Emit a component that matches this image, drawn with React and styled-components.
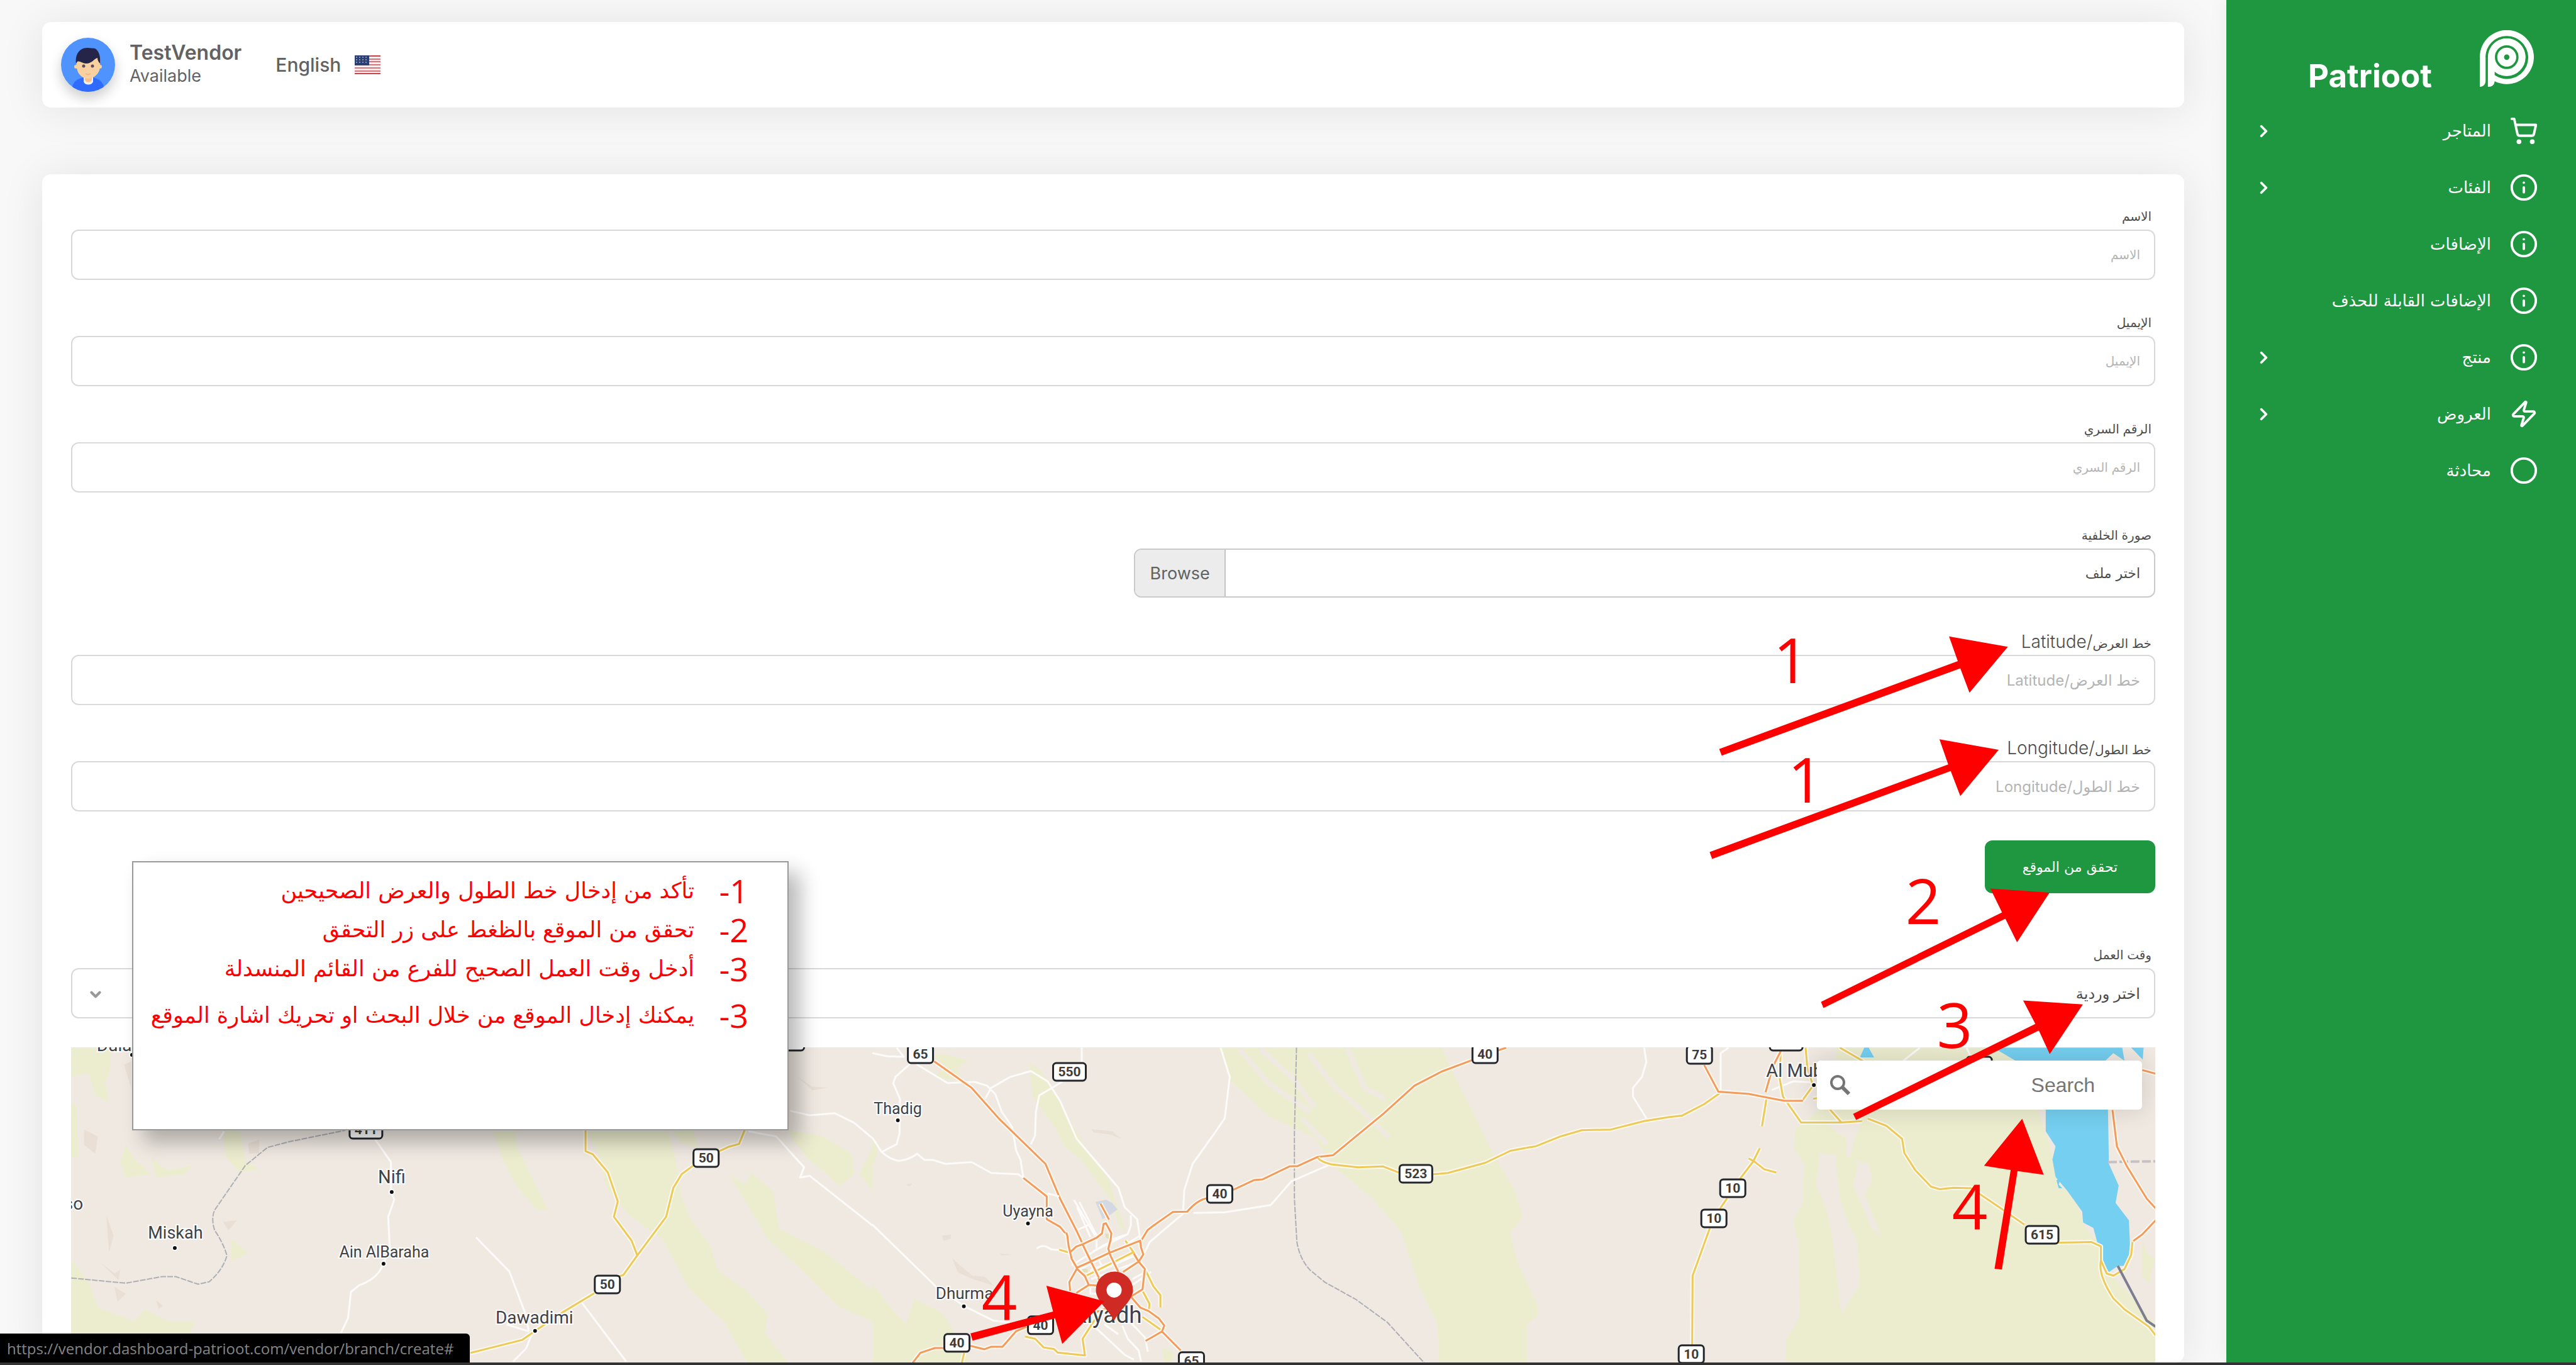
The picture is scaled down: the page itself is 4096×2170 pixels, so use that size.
import React from "react";
import styled, { createGlobalStyle } from "styled-components";
import { ShoppingCart, Info, Zap, Circle, ChevronRight, ChevronDown } from "lucide-react";

const latin = `Inter, "DejaVu Sans", sans-serif`;
const arabic = `"DejaVu Sans", sans-serif`;
const green = "#1f9640";
const red = "#ff0000";

const GlobalStyle = createGlobalStyle`
  *, *::before, *::after { box-sizing: border-box; }
  body { margin: 0; background: #f8f8f8; font-family: ${latin}; color: #626262; }
  input, select, button { font: inherit; color: inherit; }
`;

const Shell = styled.div`
  position: relative;
  height: 100vh;
  display: flex;
  flex-direction: column;
  overflow: hidden;
`;
const Body = styled.div`
  flex: 1;
  min-height: 0;
  display: flex;
`;
const Sidebar = styled.aside`
  flex: 0 0 556px;
  background: ${green};
  color: #fff;
  box-shadow: 0 0 30px rgba(0, 0, 0, 0.06);
`;
const Brand = styled.a`
  display: flex;
  align-items: flex-end;
  gap: 76px;
  padding: 48px 67px 0 0;
  height: 138px;
  color: inherit;
  text-decoration: none;
`;
const BrandName = styled.span`
  font-size: 51px;
  line-height: 52px;
  height: 43px;
  font-weight: 700;
`;
const Menu = styled.ul`
  list-style: none;
  margin: 25px 0 0;
  padding: 0 60px 0 44px;
`;
const MenuLink = styled.a`
  display: flex;
  align-items: center;
  gap: 29px;
  height: 90px;
  color: inherit;
  text-decoration: none;
  font-family: ${arabic};
  font-size: 26px;
`;
const MenuText = styled.span`
  flex: 1;
`;

const Main = styled.main`
  flex: 1;
  min-width: 0;
  display: flex;
  flex-direction: column;
  gap: 106px;
  padding: 35px 67px 0;
  overflow: hidden;
`;
const Panel = styled.section`
  background: #fff;
  border-radius: 14px;
  box-shadow: 0 4px 68px rgba(0, 0, 0, 0.09);
`;
const TopBar = styled(Panel).attrs({ as: "header" })`
  height: 136px;
  padding: 0 30px;
  display: flex;
  align-items: center;
`;
const Avatar = styled.svg`
  width: 86px;
  height: 86px;
  border-radius: 50%;
  box-shadow: 0 10px 20px rgba(0, 0, 0, 0.2);
`;
const User = styled.div`
  display: flex;
  flex-direction: column;
  margin: 0 54px 0 23px;
`;
const UserName = styled.strong`
  font-size: 32px;
  line-height: 36px;
  font-weight: 600;
`;
const UserStatus = styled.span`
  font-size: 27px;
  line-height: 38px;
`;
const Language = styled.a`
  display: flex;
  align-items: center;
  gap: 22px;
  font-size: 30px;
  font-weight: 500;
  color: inherit;
  text-decoration: none;
`;

const Form = styled(Panel).attrs({ as: "form" })`
  flex: 1;
  min-height: 0;
  padding: 52px 46px 0;
  display: flex;
  flex-direction: column;
`;
const Field = styled.div`
  display: flex;
  flex-direction: column;
  margin-bottom: ${(p) => p.$after || 53}px;
`;
const Label = styled.label`
  height: 36px;
  line-height: 30px;
  padding: 0 6px;
  font-family: ${latin};
  font-size: 20px;
  color: #4c4c4c;
`;
const LatinPart = styled.span`
  font-size: 28px;
  font-weight: 300;
`;
const Control = styled.input`
  height: 80px;
  width: 100%;
  padding: 0 22px;
  border: 2px solid #d9d9d9;
  border-radius: 12px;
  background: #fff;
  font-family: ${latin};
  font-size: ${(p) => (p.$wide ? 24 : 20)}px;
  outline: none;
  &::placeholder { color: #b4b4b4; opacity: 1; }
`;
const FileBox = styled.div`
  position: relative;
  width: 49%;
  height: 78px;
  display: flex;
  align-items: stretch;
  justify-content: space-between;
  border: 2px solid #cacaca;
  border-radius: 12px;
  overflow: hidden;
  font-size: 27px;
`;
const FileName = styled.span`
  display: flex;
  align-items: center;
  padding: 0 22px;
  font-family: ${arabic};
  font-size: 22px;
  color: #4c4c4c;
`;
const Browse = styled.span`
  display: flex;
  align-items: center;
  justify-content: center;
  width: 144px;
  background: #ececec;
  border-right: 2px solid #c4c4c4;
`;
const FileInput = styled.input`
  position: absolute;
  inset: 0;
  width: 100%;
  opacity: 0;
`;
const Submit = styled.button`
  align-self: flex-start;
  width: 271px;
  height: 84px;
  margin: -7px 0 83px;
  border: 0;
  border-radius: 12px;
  background: ${green};
  color: #fff;
  font-family: ${arabic};
  font-size: 22px;
`;
const SelectWrap = styled.div`
  position: relative;
  display: flex;
`;
const Select = styled(Control).attrs({ as: "select", $wide: true })`
  appearance: none;
  color: #4c4c4c;
`;
const SelectArrow = styled(ChevronDown)`
  position: absolute;
  left: 26px;
  top: 29px;
  color: #999;
  pointer-events: none;
`;

const MapBox = styled.div`
  position: relative;
  flex: 1;
  min-height: 0;
  overflow: hidden;
  background: #f0e9e2;
`;
const MapArt = styled.svg`
  display: block;
  width: 100%;
`;
const SearchBox = styled.div`
  position: absolute;
  top: 21px;
  right: 21px;
  width: 517px;
  height: 78px;
  display: flex;
  align-items: center;
  padding: 0 75px 0 20px;
  border-radius: 6px;
  background: #fff;
  box-shadow: 0 0 36px 4px rgba(0, 0, 0, 0.12);
`;
const SearchInput = styled.input`
  flex: 1;
  min-width: 0;
  border: 0;
  outline: 0;
  padding: 0;
  background: none;
  font-family: "Liberation Sans", sans-serif;
  font-size: 32px;
  &::placeholder { color: #757575; opacity: 1; }
`;

const Note = styled.section`
  position: absolute;
  left: 210px;
  top: 1369px;
  width: 1044px;
  height: 428px;
  border: 2px solid #999;
  background: #fff;
  box-shadow: 18px 18px 30px rgba(0, 0, 0, 0.28);
  color: ${red};
`;
const Steps = styled.ul`
  list-style: none;
  margin: 0;
  padding: 14px 62px 0 0;
`;
const Step = styled.li`
  display: flex;
  align-items: center;
  height: ${(p) => p.$height}px;
  white-space: nowrap;
  font-family: ${arabic};
  font-size: 35px;
`;
const StepNumber = styled.span`
  flex: 0 0 86px;
  font-family: "Open Sans", sans-serif;
  font-size: 52px;
  line-height: 52px;
`;
const Annotations = styled.svg`
  position: absolute;
  left: 0;
  top: 0;
  width: 100%;
  pointer-events: none;
`;
const StatusUrl = styled.div`
  position: absolute;
  left: 0;
  bottom: 4px;
  height: 46px;
  padding: 0 26px 0 11px;
  display: flex;
  align-items: center;
  border-radius: 0 6px 0 0;
  background: #000;
  color: #858585;
  font-family: "Open Sans", sans-serif;
  font-size: 24px;
`;
const Taskbar = styled.footer`
  height: 4px;
  background: #333;
`;

/* ---------- small drawings ---------- */

const Logo = () => (
  <svg width="86" height="90" viewBox="1090 65 279 292" aria-hidden="true">
    <path fill="#fff" d="M1090 204a139.500 139.500 0 1 1 76 124c0 16-10 29-34 29V204a97 97 0 1 1 34 74v18a110 110 0 1 0-46-92v122c0 18-12 31-30 31z" />
    <circle cx="1229" cy="204" r="103" fill="none" stroke={green} strokeWidth="12" strokeDasharray="500 200" transform="rotate(-180 1229 204)" />
    <circle cx="1229" cy="204" r="97" fill="#fff" />
    <circle cx="1229" cy="204" r="55" fill="none" stroke={green} strokeWidth="12" />
    <circle cx="1229" cy="204" r="14" fill={green} />
    <path fill="#fff" d="M1132 204h34v124c0 16-10 29-34 29z" />
  </svg>
);

const Face = () => (
  <Avatar viewBox="0 0 86 86" role="img" aria-label="TestVendor">
    <rect width="86" height="86" fill="#4f93ff" />
    <path d="M18 78c2-9 8-13 19-15h12c11 2 17 6 19 15L60 86H26z" fill="#2f6bff" />
    <path d="M36 60h15v10c-2 6-13 6-15 0z" fill="#f5eef0" />
    <path d="M38 58h11v9c-1 5-10 5-11 0z" fill="#f9be8d" />
    <path d="M24 38c0-14 38-14 38 0v8c0 10-9 19-19 19s-18-9-18-19z" fill="#f9d09f" />
    <circle cx="24" cy="46" r="3" fill="#f9d09f" />
    <circle cx="62" cy="46" r="3" fill="#f9d09f" />
    <path d="M24 41c-2-14 5-25 18-25l12 1c7 4 9 14 8 24-2-2-4-5-4-9-5 1-9 9-18 9-6 0-11-5-14-3z" fill="#25254a" />
    <circle cx="36" cy="45" r="2.500" fill="#5f4b5e" />
    <circle cx="50" cy="45" r="2.500" fill="#5f4b5e" />
    <path d="M39 57q4 3 8 0" stroke="#f2b489" strokeWidth="2" fill="none" />
  </Avatar>
);

const Flag = () => (
  <svg width="41" height="30" viewBox="0 0 41 30" aria-hidden="true">
    <rect width="41" height="30" fill="#f8eeee" />
    {[0, 5, 9, 14, 19, 24, 28].map((y) => (
      <rect key={y} y={y} width="41" height="2" fill="#c8434c" opacity={y === 0 || y === 28 ? 1 : 0.7} />
    ))}
    <rect width="23" height="16" fill="#2c3f72" />
    {[2, 6, 10].map((y) => [2, 7, 12, 17].map((x) => <rect key={x + "-" + y} x={x} y={y} width="2" height="2" fill="#8894b4" />))}
  </svg>
);

const Magnifier = () => (
  <svg width="34" height="34" viewBox="0 0 34 34" aria-hidden="true">
    <circle cx="13" cy="13" r="10" fill="none" stroke="#757575" strokeWidth="4" />
    <path d="M20 20l11 11" stroke="#757575" strokeWidth="6" />
  </svg>
);

/* ---------- map ---------- */

const SCALE = 0.6933;
const Tile = ({ x, y, sx, sy, children }) => (
  <g transform={`scale(${SCALE}) translate(${x} ${y}) scale(${sx} ${sy})`}>{children}</g>
);
const west = { x: 0, y: 1900, sx: 1.2755, sy: 0.7844 };
const centre = { x: 2000, y: 2350, sx: 0.9566, sy: 0.4981 };
const city = { x: 2300, y: 2700, sx: 0.3571, sy: 0.3333 };
const east = { x: 3500, y: 2350, sx: 1.0204, sy: 0.4981 };

const Line = ({ d, color, width = 3, dash }) => (
  <path d={d} fill="none" stroke={color} strokeWidth={width} strokeDasharray={dash} strokeLinejoin="round" vectorEffect="non-scaling-stroke" />
);
const Road = ({ d, color }) => (
  <>
    <Line d={d} color="#fbf8ef" width={7} />
    <Line d={d} color={color} width={3} />
  </>
);
const LAND = "#f0e9e2";
const GRASS = "#ecedcf";
const WATER = "#75cff0";
const ORANGE = "#f49a5b";
const YELLOW = "#edca58";
const WHITE = "#fcfbf9";
const RAIL = "#aeafb5";

const cities = [
  ["Nifi", 622, 1881, 29, 622, 1895],
  ["Miskah", 278, 1969, 27, 277, 1984],
  ["Ain AlBaraha", 610, 1999, 25, 609, 2009],
  ["Dawadimi", 849, 2104, 28, 850, 2116],
  ["Thadig", 1427, 1771, 25, 1427, 1781],
  ["Uyayna", 1634, 1934, 25, 1634, 1945],
  ["Dhurma", 1533, 2065, 26, 1532, 2077],
  ["Riyadh", 1760, 2103, 37, 0, 0],
  ["Al Mubarraz", 2886, 1712, 29, 2884, 1725],
  ["Dulayyah", 209, 1671, 28, 209, 1677],
  ["Afso", 102, 1923, 28, 0, 0],
];
const shields = [
  ["50", 1122, 1841], ["50", 965, 2042], ["411", 581, 1796], ["505", 1252, 1656], ["65", 1463, 1676],
  ["550", 1700, 1704], ["40", 2361, 1676], ["523", 2251, 1866], ["40", 1939, 1898], ["40", 1654, 2107],
  ["40", 1521, 2135], ["65", 1894, 2164], ["75", 2702, 1677], ["615", 2840, 1656], ["10", 2755, 1889],
  ["10", 2725, 1937], ["10", 2689, 2153], ["615", 3247, 1963], ["75", 3147, 1694],
];

const Map = () => (
  <MapArt viewBox="112 1665 3315 504" role="img" aria-label="Riyadh">
    <rect x="112" y="1665" width="3315" height="504" fill={LAND} />
    <Tile {...west}>
      <path fill={GRASS} d="M127 640H200L195 720 188 740 195 800 170 780 158 715 127 725ZM127 800 137 810 140 955 127 965ZM225 925 240 965 270 1010 225 1020 215 975ZM270 960 300 1000 345 985 330 1010 280 1020ZM400 880H430L435 925 440 970 465 995 430 1005 405 960ZM885 885H925L930 935 960 1035 985 1115 965 1115 930 1050 905 975ZM1050 885H1200L1215 970 1222 1060 1240 1140 1275 1215 1290 1290 1340 1350 1380 1420 1375 1475 1420 1568H1345L1300 1440 1240 1350 1190 1200 1130 1130 1090 1050 1070 930ZM1205 880H1245L1255 935 1225 920ZM1310 1010 1340 1040 1350 1005 1390 1060 1400 1170 1480 1235 1568 1350V1440L1510 1400 1440 1290 1380 1200 1350 1120ZM1420 880 1480 900 1530 950 1535 1010 1510 1045 1485 1010 1455 970 1420 900ZM1545 1010 1568 930V1060ZM127 1260 160 1330 175 1400 240 1440 260 1405 300 1440 350 1440 340 1475 127 1475ZM415 1200 445 1240 415 1265Z" />
      <path fill="#e9dfd5" d="M150 880 175 900 170 950 150 925ZM190 1130 203 1190 195 1240ZM180 1270 205 1300 215 1290 212 1320ZM400 1150 425 1145 410 1175ZM222 690 235 680V760ZM205 1340 225 1360 210 1385ZM1433 725 1460 755 1490 757 1460 765ZM280 1380 292 1395 284 1405ZM445 920 465 910V950H447Z" />
      <Line color={RAIL} width={2} dash="9 2" d="M127 1314 225 1329 290 1310 315 1310 355 1332 375 1325Q400 1290 407 1248 400 1210 385 1175 378 1140 385 1115L440 985 480 932 520 915 620 882" />
      <Line color={WHITE} d="M672 905 702 975 702 1062 708 1085 697 1135 700 1230 688 1272Q680 1315 645 1335L630 1355 625 1430 612 1475M855 1195 915 1295 943 1415 950 1470M910 1450 950 1470M955 1480 945 1520 922 1558M1045 1385 1125 1558M1420 825 1455 838 1500 832 1535 860 1568 905M1345 885 1395 900 1445 990 1438 1020 1455 1015 1490 1060 1568 1160M393 908 402 885" />
      <Road color={YELLOW} d="M1052 882V943L1065 952 1092 1005 1110 1090 1103 1135 1135 1205 1145 1248 1197 1135 1210 1050 1225 1010 1250 980M1290 945 1310 930 1328 922 1338 882M1145 1248 1120 1305 1100 1315M1068 1358 1010 1415 961 1469 938 1495 845 1533" />
    </Tile>
    <Tile {...centre}>
      <path fill={GRASS} d="M830 105H1365L1400 250 1440 400 1490 600 1540 760 1560 880 1530 960 1545 1080 1568 1180 1595 1290V1340L1570 1380V1568H1360L1355 1380 1310 1200 1270 960 1200 800 1110 660 1060 520 950 420 860 260ZM375 175 400 200 420 260 450 350 480 460 520 590 570 720 580 800 600 900 610 960 590 920 570 800 530 700 500 620 460 560 440 480 410 400 385 330ZM155 130 230 160 205 200 215 260 150 240 175 190 150 150ZM0 1190 30 1270 80 1380 100 1260 170 1330 240 1568H0ZM0 530 15 560 5 640H0ZM695 1490 720 1500V1568H700Z" />
      <path fill="#e9dfd5" d="M525 480 575 490 597 525 570 505 530 495ZM190 1070 205 1100 240 1155 270 1160 290 1200 240 1170 205 1140ZM167 970 188 965V985L170 995ZM80 735 95 730 90 745ZM305 1052 335 1058 310 1062Z" />
      <Line color={LAND} width={8} d="M880 110 950 270 1050 400M930 110 1010 250 1060 380M1045 130 1110 290 1160 370 1240 520M1140 110 1180 290 1230 340M1030 430 1090 550" />
      <Line color={RAIL} width={2} dash="9 2" d="M1017 105 1012 500V800L1018 1000Q1025 1080 1050 1130L1085 1185 1160 1265 1235 1370 1325 1560" />
      <Line color={WHITE} d="M0 130 35 145 75 147 58 105M90 180 55 240 50 270 66 340 65 500 58 550 22 585 0 520M22 585Q45 625 65 626 90 620 107 593L125 622 145 622 175 640 238 632 285 682 350 688 362 705M105 180 180 268 245 263 275 280 295 320 310 400 335 470 345 580 355 620 362 705M270 340 285 290 330 240 380 213 420 260 450 350 490 525 590 750 605 840 635 895 642 985M502 105V170M455 262 400 325 392 400 390 510 380 550M835 105 857 240 845 430 820 500 768 640 748 760 745 860M770 866 845 863 955 830 1005 720 1095 645M745 870 720 910 665 1000 650 1060M0 920 155 1210 220 1295 290 1362 330 1370" />
      <path fill="#d4d8e3" d="M535 815 560 805 575 820 588 850 570 875 552 895Z" />
      <Road color={ORANGE} d="M148 168 238 290 305 435 415 640 450 800 490 950 545 1180M362 705 418 790 418 895 450 930 467 970M1500 118 1520 105M1437 163 1365 215 1300 280 1225 410 1105 600 1068 608 1020 650 1000 652 935 712 915 715 865 760M803 798Q780 805 755 860L720 862 670 930 660 945 645 992M92 1568 115 1510 150 1488 170 1488M235 1478 268 1494 285 1482 312 1482 345 1410 370 1390" />
      <Road color={YELLOW} d="M1068 612Q1075 630 1100 642L1165 656 1225 652 1262 680M1345 688 1380 682 1470 635 1530 580 1568 566M213 1568 220 1510" />
    </Tile>
    <Tile {...city}>
      <Line color={WHITE} d="M215 490Q240 465 275 475L310 495 360 500M455 155 590 400M490 170 600 400 600 490M475 205 560 410M480 360 560 320M575 510 800 390 820 330 820 260M690 430 800 390M440 605 640 470 700 440M480 640 700 520 880 400M540 680 840 540M600 540 650 640M565 700 840 590M830 740 950 650M830 700 930 640M600 1040 780 1220 840 1255M765 1020 800 1110 870 1190 885 1265M820 1000 910 1100 930 1200M650 1010 740 1080M285 110 360 130M600 800H560V740M540 600 620 560 M560 640 700 580" />
      <path fill="#e3dfb8" d="M655 385 680 390 682 425 660 415ZM505 630 540 628 545 655 515 650Z" />
      <Road color={YELLOW} d="M525 680 585 650 835 515M785 435 840 520 915 640 965 750 1010 810V895M895 780 940 870 935 920M895 960 1015 1050M360 497 425 517M600 960 510 1110 525 1225 350 1205 325 1180 260 1170 205 1110 140 1095" />
      <Road color={ORANGE} d="M405 380 412 400 420 470 440 560 475 625 425 720 430 780M435 510 470 475 510 460 600 415 635 385 645 320 660 315 695 385 690 430 675 490 690 540 740 650M475 620 560 580 680 520 880 435 885 480 900 530 870 580 770 650M840 525 870 580 910 630 895 770 820 820 880 895 935 920 1000 970 1035 1020 1020 1060 915 1125M1020 1060 1140 1190M475 630 525 680 550 740 600 743M550 740 470 795M625 180 680 290M510 460 615 690M655 905 600 925" />
    </Tile>
    <Tile {...east}>
      <path fill={GRASS} d="M697 105H1050L1100 160 1150 390 1175 540 1195 720 1240 830 1255 930 1285 1000 1300 1100 1330 1180 1415 1380V1568H582L585 1450 615 1340 612 1000 600 900 622 820 625 640 602 570 605 480 640 420 655 395 697 160ZM1385 980 1395 1050 1413 1080 1400 1190 1385 1160ZM0 1290 20 1300 25 1335H0Z" />
      <path fill={LAND} d="M660 590 695 600 705 800 725 920 745 1000 748 1200 708 1330 700 1200 690 1000 675 850 652 740ZM680 460 755 440 735 540 730 620 770 640 778 720 760 780 800 980 775 930 755 830 735 740 745 640 720 600 718 520 695 490Z" />
      <path fill={WATER} d="M1050 105H1340L1345 165 1320 130 1302 165 1308 400 1310 640 1332 740 1325 820 1355 900 1358 1050 1345 1110 1330 1110 1310 1138 1298 1100 1285 1010 1275 935 1252 910 1250 860 1215 760 1190 700 1183 620 1190 560 1168 490V380L1100 165ZM760 105 770 105 782 150 750 150ZM1360 105H1388L1386 160ZM1192 715 1203 705 1197 735 1205 752H1197Z" />
      <Line color={WHITE} d="M265 105 270 170 260 240 240 290V330L270 430M437 320V130L455 105M848 165 885 105M990 105 1000 150M552 300 600 260 650 265" />
      <Line color="#c4c0c4" dash="14 4" width={4} d="M1308 632 1415 628" />
      <Road color={YELLOW} d="M0 566 20 560 75 515 125 485 190 482 265 443 320 425 350 418 400 365 437 312M572 120 570 250 577 330 618 450 708 450 755 443M540 340 530 467M525 568 510 630 480 710M500 615 512 628 535 665 562 680M452 797 435 848M413 935 374 1155 373 1475M628 105 632 200 645 280 620 350M645 340 660 336M705 105 760 170M683 390 708 448M768 432 810 465 845 525 850 590 875 670 910 745 930 757 960 750 1000 752 1060 835 1120 920M1195 1003 1270 1000 1292 1020 1292 1085Q1285 1150 1320 1260L1345 1310 1400 1390 1415 1430M1292 1085 1305 1145 1320 1155 1345 1125 1360 1060 1363 1000" />
      <Road color={ORANGE} d="M400 185 432 308 500 318 580 350 622 350M572 122 555 190 545 260 538 310M1365 995 1385 965 1415 900M1318 392 1328 560 1350 650 1395 800 1415 845M1385 208 1415 225" />
      <Line color="#7c7e90" width={4} d="M1330 1110 1395 1362 1415 1390" />
    </Tile>
    {shields.map(([n, x, y]) => {
      const w = n.length === 3 ? 52 : 40;
      return (
        <g key={n + x + y}>
          <rect x={x - w / 2} y={y - 14} width={w} height="28" rx="5" fill="#fff" stroke="#23262a" strokeWidth="3" />
          <text x={x} y={y + 7} textAnchor="middle" fontFamily="Roboto, sans-serif" fontWeight="700" fontSize="21" fill="#3c3c3c">{n}</text>
        </g>
      );
    })}
    {cities.map(([name, x, y, size, dx, dy]) => (
      <g key={name}>
        <text x={x} y={y} textAnchor="middle" fontFamily="Roboto, sans-serif" fontSize={size} fill="#3d4248" stroke="#fdfcfa" strokeWidth="4" paintOrder="stroke">{name}</text>
        {dx > 0 && <circle cx={dx} cy={dy} r="4" fill="#111" stroke="#fff" strokeWidth="2" />}
      </g>
    ))}
    <path fill="#cf2a23" d="M1771 2100C1765 2085 1742 2068 1742 2051a29 29 0 0 1 59 0C1801 2068 1777 2085 1771 2100Z" />
    <circle cx="1771" cy="2051" r="12" fill="#fff" />
  </MapArt>
);

/* ---------- page data ---------- */

const menu = [
  ["المتاجر", ShoppingCart, true],
  ["الفئات", Info, true],
  ["الإضافات", Info, false],
  ["الإضافات القابلة للحذف", Info, false],
  ["منتج", Info, true],
  ["العروض", Zap, true],
  ["محادثة", Circle, false],
];
const steps = [
  ["-1", "تأكد من إدخال خط الطول والعرض الصحيحين", 62],
  ["-2", "تحقق من الموقع بالظغط على زر التحقق", 62],
  ["-3", "أدخل وقت العمل الصحيح للفرع من القائم المنسدلة", 62],
  ["-3", "يمكنك إدخال الموقع من خلال البحث او تحريك اشارة الموقع", 86],
];
const digits = [
  ["1", 2848, 1086], ["1", 2871, 1276], ["2", 3058, 1469], ["3", 3108, 1666], ["4", 1589, 2098], ["4", 3132, 1954],
];

const TextField = ({ id, label, english, type = "text" }) => (
  <Field>
    <Label htmlFor={id}>
      {label}
      {english && <LatinPart>/{english}</LatinPart>}
    </Label>
    <Control id={id} type={type} $wide={Boolean(english)} placeholder={english ? `${label}/${english}` : label} />
  </Field>
);

export default function App() {
  return (
    <Shell>
      <GlobalStyle />
      <Body dir="rtl">
        <Sidebar>
          <Brand href="#"><Logo /><BrandName>Patrioot</BrandName></Brand>
          <Menu>
            {menu.map(([text, Icon, open]) => (
              <li key={text}>
                <MenuLink href="#">
                  <Icon size={46} strokeWidth={2} />
                  <MenuText>{text}</MenuText>
                  {open && <ChevronRight size={31} strokeWidth={3} />}
                </MenuLink>
              </li>
            ))}
          </Menu>
        </Sidebar>
        <Main>
          <TopBar dir="ltr">
            <Face />
            <User><UserName>TestVendor</UserName><UserStatus>Available</UserStatus></User>
            <Language href="#">English<Flag /></Language>
          </TopBar>
          <Form>
            <TextField id="name" label="الاسم" />
            <TextField id="email" label="الإيميل" type="email" />
            <TextField id="password" label="الرقم السري" type="password" />
            <Field $after={55}>
              <Label htmlFor="cover">صورة الخلفية</Label>
              <FileBox>
                <FileName>اختر ملف</FileName>
                <Browse>Browse</Browse>
                <FileInput id="cover" type="file" />
              </FileBox>
            </Field>
            <TextField id="lat" label="خط العرض" english="Latitude" />
            <TextField id="lng" label="خط الطول" english="Longitude" />
            <Submit type="button">تحقق من الموقع</Submit>
            <Field $after={46}>
              <Label htmlFor="shift">وقت العمل</Label>
              <SelectWrap>
                <Select id="shift"><option>اختر وردية</option></Select>
                <SelectArrow size={26} strokeWidth={4} />
              </SelectWrap>
            </Field>
            <MapBox>
              <Map />
              <SearchBox>
                <SearchInput aria-label="Search" placeholder="Search" />
                <Magnifier />
              </SearchBox>
            </MapBox>
          </Form>
        </Main>
      </Body>
      <Taskbar />
      <Note dir="rtl">
        <Steps>
          {steps.map(([n, text, height]) => (
            <Step key={text} $height={height}>
              <StepNumber><bdi dir="ltr">{n}</bdi></StepNumber>
              {text}
            </Step>
          ))}
        </Steps>
      </Note>
      <Annotations viewBox="0 0 4096 2170" fill={red} aria-hidden="true">
        <Tile x={3700} y={1150} sx={0.9566} sy={0.7972}>
          <path d="M254 712 826 459 805 388 946 418 854 550 832 480 260 731ZM231 1008 803 756 782 684 924 714 832 847 809 775 237 1028ZM498 1439 932 1182 904 1113 1046 1125 968 1268 940 1200 504 1457Z" />
        </Tile>
        <g transform={`scale(${SCALE})`}>
          <path d="M4250 2554 4668 2348 4640 2294 4777 2303 4701 2417 4676 2363 4257 2568Z" />
        </g>
        <Tile x={4080} y={2390} sx={0.5612} sy={0.4725}>
          <path d="M881 1099 947 620 838 599 994 371 1082 643 975 625 911 1103Z" />
        </Tile>
        <Tile {...centre}>
          <path d="M236 1420 434 1320 418 1201 557 1273 456 1469 439 1351 241 1454Z" />
        </Tile>
        {digits.map(([n, x, y]) => (
          <text key={n + x} x={x} y={y} textAnchor="middle" fontFamily="Open Sans, sans-serif" fontSize="99">{n}</text>
        ))}
      </Annotations>
      <StatusUrl>https://vendor.dashboard-patrioot.com/vendor/branch/create#</StatusUrl>
    </Shell>
  );
}
